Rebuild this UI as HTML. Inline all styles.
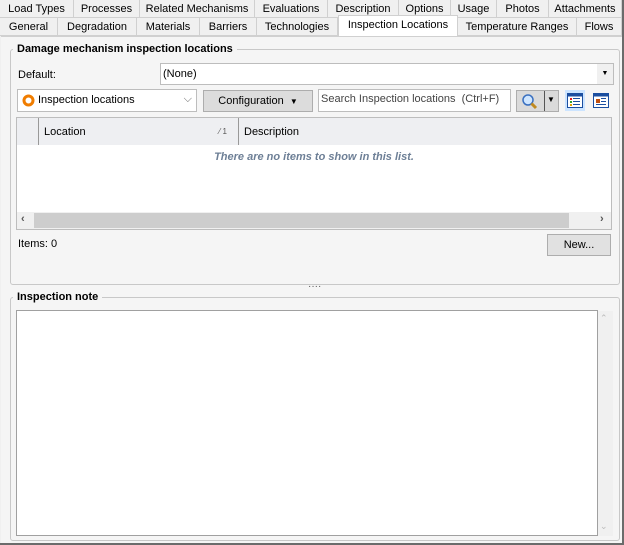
<!DOCTYPE html>
<html><head><style>
*{box-sizing:border-box;margin:0;padding:0}
body{width:624px;height:545px;position:relative;background:#f0f0f0;font-family:"Liberation Sans",sans-serif;font-size:11px;color:#000;overflow:hidden}
.a{position:absolute}
.tab{position:absolute;height:18px;border-right:1px solid #d0d0d0;border-bottom:1px solid #d0d0d0;text-align:center;line-height:19px;background:#f0f0f0;white-space:nowrap}
.box{position:absolute;border:1px solid #c8c8c8;border-radius:3px}
.gt{position:absolute;background:#f5f5f5;font-weight:bold;padding:0 4px;line-height:13px}
.in{position:absolute;background:#fff;border:1px solid #bdbdbd}
.btn{position:absolute;background:#e1e1e1;border:1px solid #adadad;text-align:center}
</style></head><body>
<div class="a" style="left:0;top:0;width:624px;height:545px;border-right:2px solid #6b6b6b;border-bottom:2px solid #6b6b6b"></div>
<div class="tab" style="left:0;top:0;width:74px">Load Types</div>
<div class="tab" style="left:74px;top:0;width:66px">Processes</div>
<div class="tab" style="left:140px;top:0;width:115px">Related Mechanisms</div>
<div class="tab" style="left:255px;top:0;width:73px">Evaluations</div>
<div class="tab" style="left:328px;top:0;width:71px">Description</div>
<div class="tab" style="left:399px;top:0;width:52px">Options</div>
<div class="tab" style="left:451px;top:0;width:46px">Usage</div>
<div class="tab" style="left:497px;top:0;width:52px">Photos</div>
<div class="tab" style="left:549px;top:0;width:73px">Attachments</div>
<div class="tab" style="left:0;top:18px;width:58px">General</div>
<div class="tab" style="left:58px;top:18px;width:79px">Degradation</div>
<div class="tab" style="left:137px;top:18px;width:63px">Materials</div>
<div class="tab" style="left:200px;top:18px;width:57px">Barriers</div>
<div class="tab" style="left:257px;top:18px;width:81px">Technologies</div>
<div class="tab" style="left:338px;top:15px;width:120px;height:22px;background:#fff;border:1px solid #d0d0d0;border-bottom:none;line-height:19px">Inspection Locations</div>
<div class="tab" style="left:458px;top:18px;width:119px">Temperature Ranges</div>
<div class="tab" style="left:577px;top:18px;width:45px">Flows</div>
<div class="a" style="left:1px;top:36px;width:621px;height:507px;background:#f5f5f5;border-top:1px solid #d0d0d0"></div>
<div class="box" style="left:10px;top:49px;width:610px;height:236px"></div>
<div class="gt" style="left:13px;top:43px">Damage mechanism inspection locations</div>
<div class="a" style="left:18px;top:69px">Default:</div>
<div class="in" style="left:160px;top:63px;width:454px;height:22px;padding:4px 2px">(None)<span class="a" style="right:0;top:0;width:16px;height:20px;background:#f0f0f0;text-align:center;font-size:7px;line-height:20px">▼</span></div>
<div class="in" style="left:17px;top:89px;width:180px;height:23px;padding:4px 0 0 20px">Inspection locations<span class="a" style="right:4px;top:3px;color:#666">⌵</span>
<svg class="a" style="left:4px;top:4px" width="13" height="13"><circle cx="6.5" cy="6.5" r="4.5" fill="none" stroke="#f07d00" stroke-width="3"/></svg></div>
<div class="btn" style="left:203px;top:90px;width:110px;height:22px;line-height:21px;background:#dcdcdc">Configuration &nbsp;<span style="font-size:8px">▼</span></div>
<div class="in" style="left:318px;top:89px;width:193px;height:23px;padding:3px 2px;color:#444">Search Inspection locations &nbsp;(Ctrl+F)</div>
<div class="btn" style="left:516px;top:90px;width:43px;height:22px;background:#dadada">
<svg class="a" style="left:3px;top:2px" width="20" height="18"><circle cx="8" cy="7" r="5" fill="#cfe6ff" stroke="#3a70c0" stroke-width="1.5"/><line x1="11.5" y1="10.5" x2="16" y2="15" stroke="#c08a20" stroke-width="3"/></svg>
<span class="a" style="left:27px;top:0;width:1px;height:20px;background:#555"></span><span class="a" style="left:30px;top:4px;font-size:8px">▼</span></div>
<div class="a" style="left:565px;top:90px;width:20px;height:21px;background:#cce4ff"></div>
<svg class="a" style="left:567px;top:93px" width="16" height="15"><rect x="0.5" y="0.5" width="15" height="14" fill="#fff" stroke="#1c4fa0"/><rect x="0.5" y="0.5" width="15" height="3" fill="#1c4fa0"/><rect x="3" y="5" width="2" height="2" fill="#e02020"/><rect x="3" y="8" width="2" height="2" fill="#30a030"/><rect x="3" y="11" width="2" height="2" fill="#e0a000"/><rect x="6" y="5" width="7" height="1" fill="#1c4fa0"/><rect x="6" y="8" width="7" height="1" fill="#1c4fa0"/><rect x="6" y="11" width="7" height="1" fill="#1c4fa0"/></svg>
<svg class="a" style="left:593px;top:93px" width="16" height="15"><rect x="0.5" y="0.5" width="15" height="14" fill="#fff" stroke="#1c4fa0"/><rect x="0.5" y="0.5" width="15" height="3" fill="#1c4fa0"/><rect x="3" y="6" width="4" height="4" fill="#c05010"/><rect x="8" y="5" width="5" height="1" fill="#1c4fa0"/><rect x="8" y="8" width="5" height="1" fill="#1c4fa0"/><rect x="3" y="11" width="10" height="1" fill="#1c4fa0"/></svg>
<div class="a" style="left:16px;top:117px;width:596px;height:113px;background:#fff;border:1px solid #bdbdbd"></div>
<div class="a" style="left:17px;top:118px;width:594px;height:27px;background:#eeeff2"></div>
<div class="a" style="left:38px;top:118px;width:1px;height:27px;background:#999"></div>
<div class="a" style="left:238px;top:118px;width:1px;height:27px;background:#999"></div>
<div class="a" style="left:44px;top:126px">Location</div>
<div class="a" style="left:219px;top:127px;font-size:8px;color:#555">⁄ 1</div>
<div class="a" style="left:244px;top:126px">Description</div>
<div class="a" style="left:17px;top:151px;width:594px;text-align:center;font-style:italic;font-weight:bold;color:#6d7f96">There are no items to show in this list.</div>
<div class="a" style="left:17px;top:212px;width:594px;height:17px;background:#f0f0f0"></div>
<div class="a" style="left:34px;top:213px;width:535px;height:15px;background:#cdcdcd"></div>
<div class="a" style="left:21px;top:213px;color:#555;font-weight:bold">‹</div>
<div class="a" style="left:600px;top:213px;color:#555;font-weight:bold">›</div>
<div class="a" style="left:18px;top:238px">Items: 0</div>
<div class="btn" style="left:547px;top:234px;width:64px;height:22px;line-height:21px">New...</div>
<div class="a" style="left:308px;top:281px;color:#555;font-size:10px">····</div>
<div class="box" style="left:10px;top:297px;width:610px;height:244px"></div>
<div class="gt" style="left:13px;top:291px">Inspection note</div>
<div class="a" style="left:16px;top:310px;width:582px;height:226px;background:#fff;border:1px solid #a0a0a0"></div>
<div class="a" style="left:598px;top:311px;width:15px;height:225px;background:#f0f0f0"></div>
<div class="a" style="left:600px;top:313px;color:#bbb;font-size:9px">⌃</div>
<div class="a" style="left:600px;top:521px;color:#bbb;font-size:9px">⌄</div>
</body></html>
